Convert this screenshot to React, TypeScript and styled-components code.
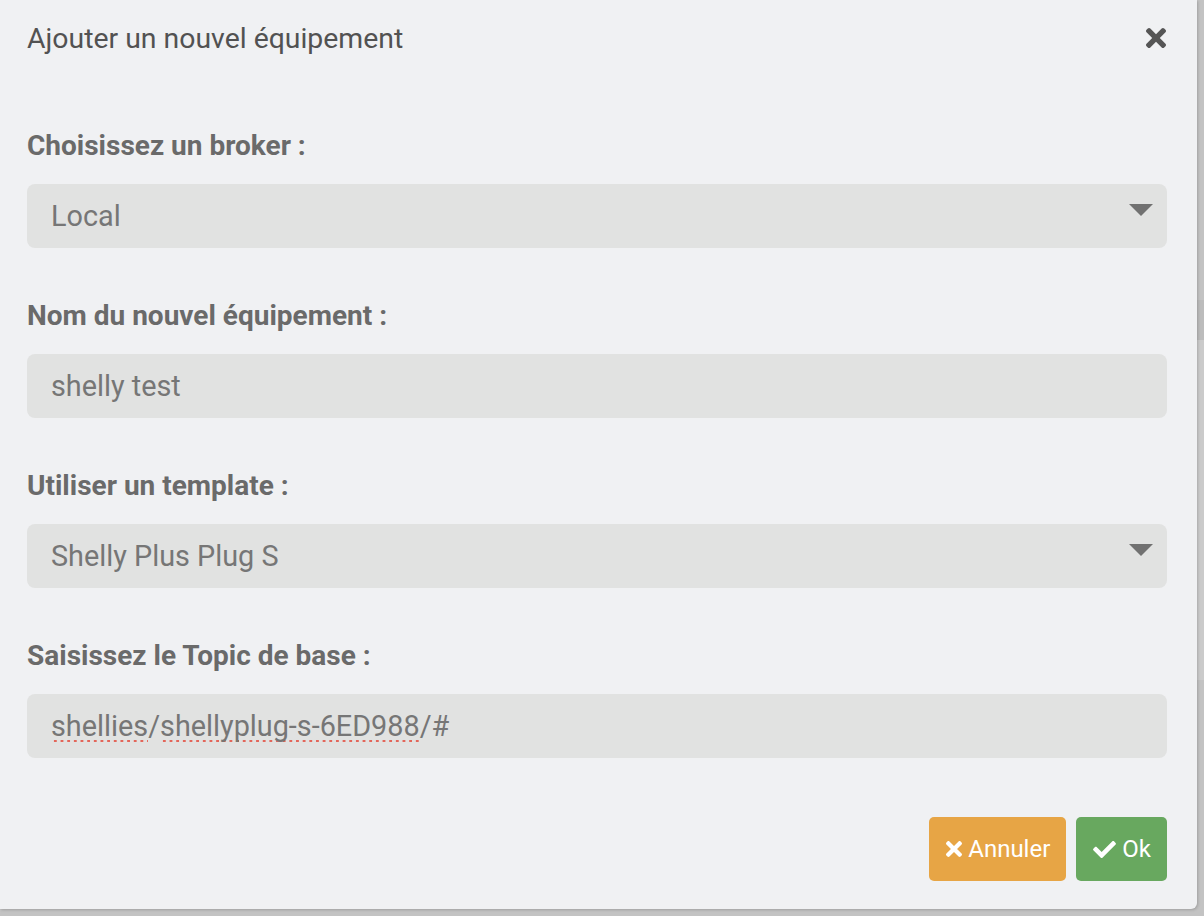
import styled, { createGlobalStyle } from 'styled-components';

const GlobalStyle = createGlobalStyle`
  html, body {
    margin: 0;
    padding: 0;
  }
  body {
    min-height: 916px;
    background: linear-gradient(
      to bottom,
      #c3c3c3 0,
      #c3c3c3 300px,
      #bcbcbc 300px,
      #bcbcbc 340px,
      #cbcbcb 340px,
      #cbcbcb 680px,
      #c3c3c3 680px
    );
    font-family: Roboto, 'Liberation Sans', sans-serif;
  }
`;

const Dialog = styled.div`
  width: 1197px;
  box-sizing: border-box;
  padding: 19px 30px 28px 27px;
  background: #f0f1f3;
  border-bottom-right-radius: 6px;
  box-shadow: 1px 1px 3px rgba(0, 0, 0, 0.18);
  display: flex;
  flex-direction: column;
`;

const Header = styled.div`
  display: flex;
  align-items: center;
  justify-content: space-between;
  height: 40px;
  padding-right: 1px;
`;

const Title = styled.h1`
  margin: 0;
  font-size: 28.4px;
  line-height: 40px;
  font-weight: 400;
  color: #525252;
`;

const CloseButton = styled.button`
  border: none;
  background: none;
  padding: 0;
  margin-top: -2px;
  width: 20px;
  height: 20px;
  display: flex;
  color: #555;
  cursor: pointer;
`;

const Body = styled.div`
  display: flex;
  flex-direction: column;
  gap: 46px;
  padding-top: 65px;
`;

const Group = styled.div`
  display: flex;
  flex-direction: column;
`;

const Label = styled.label`
  font-size: 28px;
  line-height: 40px;
  font-weight: 700;
  color: #6a6a6a;
  padding-top: 2px;
  margin-bottom: 18px;
`;

const Field = styled.div`
  height: 64px;
  box-sizing: border-box;
  padding: 0 14px 0 24px;
  border-radius: 8px;
  background: #e1e2e1;
  display: flex;
  align-items: center;
  justify-content: space-between;
  font-size: 28.8px;
  line-height: 40px;
  color: #767676;
  white-space: nowrap;
`;

const Caret = styled.svg`
  width: 24px;
  height: 12px;
  margin-bottom: 12px;
  fill: #717171;
`;

const Misspelled = styled.span`
  background-image: radial-gradient(circle, #e3665a 1.1px, transparent 1.5px);
  background-size: 6.67px 4px;
  background-repeat: repeat-x;
  background-position: 1px 100%;
`;

const Footer = styled.div`
  display: flex;
  justify-content: flex-end;
  gap: 10px;
  margin-top: 59px;
`;

const Button = styled.button<{ $tone: 'warning' | 'success' }>`
  height: 64px;
  padding: 0 16px 0 17px;
  border: none;
  border-radius: 5px;
  background: ${(p) => (p.$tone === 'warning' ? '#e7a545' : '#68a85f')};
  color: #fff;
  font-family: Roboto, 'Liberation Sans', sans-serif;
  font-size: 24px;
  display: flex;
  align-items: center;
  gap: 6px;
  cursor: pointer;
`;

const TIMES =
  'M242.72 256l100.07-100.07c12.28-12.28 12.28-32.19 0-44.48l-22.24-22.24c-12.28-12.28-32.19-12.28-44.48 0L176 189.28 75.93 89.21c-12.28-12.28-32.19-12.28-44.48 0L9.21 111.45c-12.28 12.28-12.28 32.19 0 44.48L109.28 256 9.21 356.07c-12.28 12.28-12.28 32.19 0 44.48l22.24 22.24c12.28 12.28 32.2 12.28 44.48 0L176 322.72l100.07 100.07c12.28 12.28 32.2 12.28 44.48 0l22.24-22.24c12.28-12.28 12.28-32.19 0-44.48L242.72 256z';
const CHECK =
  'M173.898 439.404l-166.4-166.4c-9.997-9.997-9.997-26.206 0-36.204l36.203-36.204c9.997-9.998 26.207-9.998 36.204 0L192 312.69 432.095 72.596c9.997-9.997 26.207-9.997 36.204 0l36.203 36.204c9.997 9.997 9.997 26.206 0 36.204l-294.4 294.401c-9.998 9.997-26.207 9.997-36.204-.001z';

function TimesIcon({ size }: { size: number }) {
  return (
    <svg width={size} height={size} viewBox="0 80 352 352" fill="currentColor">
      <path d={TIMES} />
    </svg>
  );
}

function CheckIcon() {
  return (
    <svg width={23} height={17} viewBox="0 66 512 380" fill="currentColor">
      <path d={CHECK} />
    </svg>
  );
}

function SelectCaret() {
  return (
    <Caret viewBox="0 0 24 12">
      <polygon points="0,0 24,0 12,12" />
    </Caret>
  );
}

function App() {
  return (
    <>
      <GlobalStyle />
      <Dialog>
        <Header>
          <Title>Ajouter un nouvel équipement</Title>
          <CloseButton aria-label="Fermer">
            <TimesIcon size={20} />
          </CloseButton>
        </Header>
        <Body>
          <Group>
            <Label>Choisissez un broker :</Label>
            <Field>
              <span>Local</span>
              <SelectCaret />
            </Field>
          </Group>
          <Group>
            <Label>Nom du nouvel équipement :</Label>
            <Field>
              <span>shelly test</span>
            </Field>
          </Group>
          <Group>
            <Label>Utiliser un template :</Label>
            <Field>
              <span>Shelly Plus Plug S</span>
              <SelectCaret />
            </Field>
          </Group>
          <Group>
            <Label>Saisissez le Topic de base :</Label>
            <Field>
              <span>
                <Misspelled>shellies</Misspelled>/<Misspelled>shellyplug-s-6ED988</Misspelled>/#
              </span>
            </Field>
          </Group>
        </Body>
        <Footer>
          <Button $tone="warning">
            <TimesIcon size={16} />
            Annuler
          </Button>
          <Button $tone="success">
            <CheckIcon />
            Ok
          </Button>
        </Footer>
      </Dialog>
    </>
  );
}

export default App;
